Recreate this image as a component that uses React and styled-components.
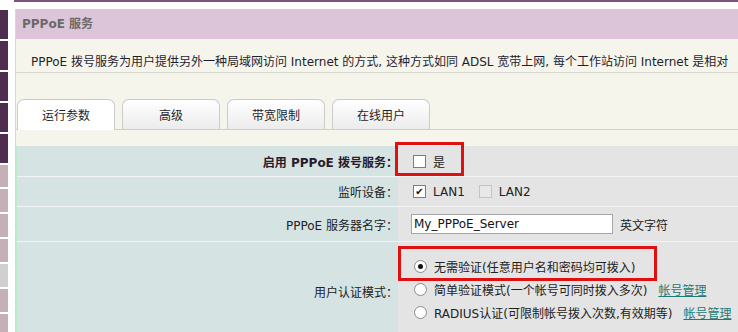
import React from 'react'
import styled, { createGlobalStyle } from 'styled-components'

const GlobalStyle = createGlobalStyle`
  html, body { margin: 0; padding: 0; background: #fff; overflow: hidden; }
  body {
    font-family: "DejaVu Sans", "Noto Sans CJK SC", sans-serif;
    font-size: 12px;
    color: #222;
  }
`

const sideStrips = [
  ...Array(5).fill({ tone: 'dark', h: 29 }),
  { tone: 'light', h: 22 },
  { tone: 'light', h: 23 },
  { tone: 'light', h: 23 },
  { tone: 'light', h: 23 },
  { tone: 'gray', h: 23 },
  { tone: 'light', h: 23 },
  { tone: 'light', h: 23 },
]

const stripColor = { dark: '#4f2d4f', light: '#c5b0b7', gray: '#d0d0d0' }

const tabs = ['运行参数', '高级', '带宽限制', '在线用户']

const App = () => {
  return (
    <>
      <GlobalStyle />
      <Page>
        <Sidebar>
          {sideStrips.map((s, i) => (
            <Strip key={i} tone={s.tone} h={s.h} />
          ))}
        </Sidebar>
        <Main>
          <Panel>
            <Header>PPPoE 服务</Header>
            <Description>
              PPPoE 拨号服务为用户提供另外一种局域网访问 Internet 的方式, 这种方式如同 ADSL 宽带上网, 每个工作站访问 Internet 是相对
            </Description>
            <TabArea>
              <TabBar>
                {tabs.map((t, i) => (
                  <Tab key={t} active={i === 0}>{t}</Tab>
                ))}
              </TabBar>
              <Spacer />
              <Form>
                <Label bold h={30}>启用 PPPoE 拨号服务：</Label>
                <Value h={30}>
                  <Check />
                  <OptText>是</OptText>
                  <Frame style={{ left: -3, top: -4, width: 69, height: 34 }} />
                </Value>

                <Label h={29}>监听设备：</Label>
                <Value h={29}>
                  <Check checked>✔</Check>
                  <OptText>LAN1</OptText>
                  <Check disabled gap={14} />
                  <OptText>LAN2</OptText>
                </Value>

                <Label h={34}>PPPoE 服务器名字：</Label>
                <Value h={34}>
                  <TextInput defaultValue="My_PPPoE_Server" />
                  <Hint>英文字符</Hint>
                </Value>

                <Label h={98} last>用户认证模式：</Label>
                <AuthCell last>
                  <RadioLine>
                    <Radio checked />
                    <OptText>无需验证(任意用户名和密码均可拨入)</OptText>
                  </RadioLine>
                  <RadioLine>
                    <Radio />
                    <OptText>简单验证模式(一个帐号可同时拨入多次)</OptText>
                    <Link href="#">帐号管理</Link>
                  </RadioLine>
                  <RadioLine>
                    <Radio />
                    <OptText>RADIUS认证(可限制帐号拨入次数,有效期等)</OptText>
                    <Link href="#">帐号管理</Link>
                  </RadioLine>
                  <Frame style={{ left: 0, top: 4, width: 259, height: 35 }} />
                </AuthCell>
              </Form>
            </TabArea>
          </Panel>
        </Main>
      </Page>
    </>
  )
}

export default App

const Page = styled.div`
  display: flex;
  align-items: flex-start;
  width: 1200px;
`

const Sidebar = styled.div`
  flex: none;
  width: 8px;
  padding-top: 10px;
  display: flex;
  flex-direction: column;
  gap: 2px;
`

const Strip = styled.div`
  height: ${(p) => p.h}px;
  background: ${(p) => stripColor[p.tone]};
`

const Main = styled.div`
  flex: none;
  width: 1100px;
  margin-left: 6px;
  border-top: 2px solid #7d527d;
  padding-top: 7px;
`

const Panel = styled.div`
  border-left: 1px solid #d6d6d6;
  margin-left: 1px;
`

const Header = styled.div`
  height: 30px;
  line-height: 30px;
  background: #dcc5d9;
  padding-left: 6px;
  font-weight: bold;
  color: #6a6a6a;
`

const Description = styled.div`
  height: 34px;
  box-sizing: border-box;
  padding: 16px 0 0 15px;
  line-height: 14px;
  background: #f6f5ec;
  border-bottom: 1px solid #d8d8d2;
  white-space: nowrap;
  overflow: hidden;
  color: #1e1e30;
`

const TabArea = styled.div`
  background: #f6f5ec;
  padding-top: 26px;
`

const TabBar = styled.div`
  display: flex;
  gap: 7px;
  height: 31px;
  padding-left: 1px;
  border-bottom: 1px solid #cfcfcf;
  box-sizing: border-box;
`

const Tab = styled.div`
  width: 98px;
  box-sizing: border-box;
  height: ${(p) => (p.active ? 31 : 30)}px;
  border: 1px solid #cbcbcb;
  border-bottom: none;
  border-radius: 7px 7px 0 0;
  background: ${(p) => (p.active ? '#fff' : 'linear-gradient(#ffffff, #ececec)')};
  display: flex;
  align-items: center;
  justify-content: center;
  padding-bottom: 1px;
  color: #1f1f2a;
  position: relative;
  z-index: 1;
`

const Spacer = styled.div`
  height: 16px;
`

const Form = styled.div`
  display: grid;
  grid-template-columns: 381px 1fr;
  border-left: 1px solid #bdeccb;
`

const Label = styled.div`
  height: ${(p) => p.h}px;
  background: #d5e3e3;
  border-bottom: ${(p) => (p.last ? 'none' : '1px solid #f2f5f5')};
  display: flex;
  align-items: center;
  justify-content: flex-end;
  font-weight: ${(p) => (p.bold ? 'bold' : 'normal')};
  color: ${(p) => (p.bold ? '#2b1a2b' : '#222')};
`

const Value = styled.div`
  position: relative;
  height: ${(p) => p.h}px;
  background: #e4e4e4;
  border-bottom: 1px solid #f4f4f4;
  display: flex;
  align-items: center;
  padding-left: 13px;
`

const AuthCell = styled.div`
  position: relative;
  background: #e4e4e4;
  padding: 13px 0 14px 16px;
`

const RadioLine = styled.div`
  display: flex;
  align-items: center;
  height: 23px;
`

const Check = styled.span`
  flex: none;
  width: 11px;
  height: 11px;
  margin-left: ${(p) => (p.gap || 2)}px;
  border: 1px solid ${(p) => (p.disabled ? '#c4c4c4' : '#7c7c7c')};
  background: ${(p) => (p.disabled ? '#e8e8e8' : '#fff')};
  display: flex;
  align-items: center;
  justify-content: center;
  font-size: 10px;
  line-height: 1;
  color: #111;
`

const Radio = styled.span`
  flex: none;
  width: 11px;
  height: 11px;
  border-radius: 50%;
  border: 1px solid #8a8a8a;
  background: #fff;
  display: flex;
  align-items: center;
  justify-content: center;
  &::after {
    content: '';
    display: ${(p) => (p.checked ? 'block' : 'none')};
    width: 5px;
    height: 5px;
    border-radius: 50%;
    background: #111;
  }
`

const OptText = styled.span`
  margin-left: 7px;
  color: #222;
  white-space: nowrap;
`

const TextInput = styled.input`
  width: 202px;
  height: 20px;
  box-sizing: border-box;
  border: 1px solid #a8a8a8;
  background: #fff;
  font-family: "DejaVu Sans", "Noto Sans CJK SC", sans-serif;
  font-size: 12px;
  padding: 0 2px;
  color: #111;
  outline: none;
`

const Hint = styled.span`
  margin-left: 7px;
`

const Link = styled.a`
  margin-left: 11px;
  color: #1e7a77;
  text-decoration: underline;
  white-space: nowrap;
`

const Frame = styled.div`
  position: absolute;
  box-sizing: border-box;
  border: 3px solid #e01010;
  pointer-events: none;
`
